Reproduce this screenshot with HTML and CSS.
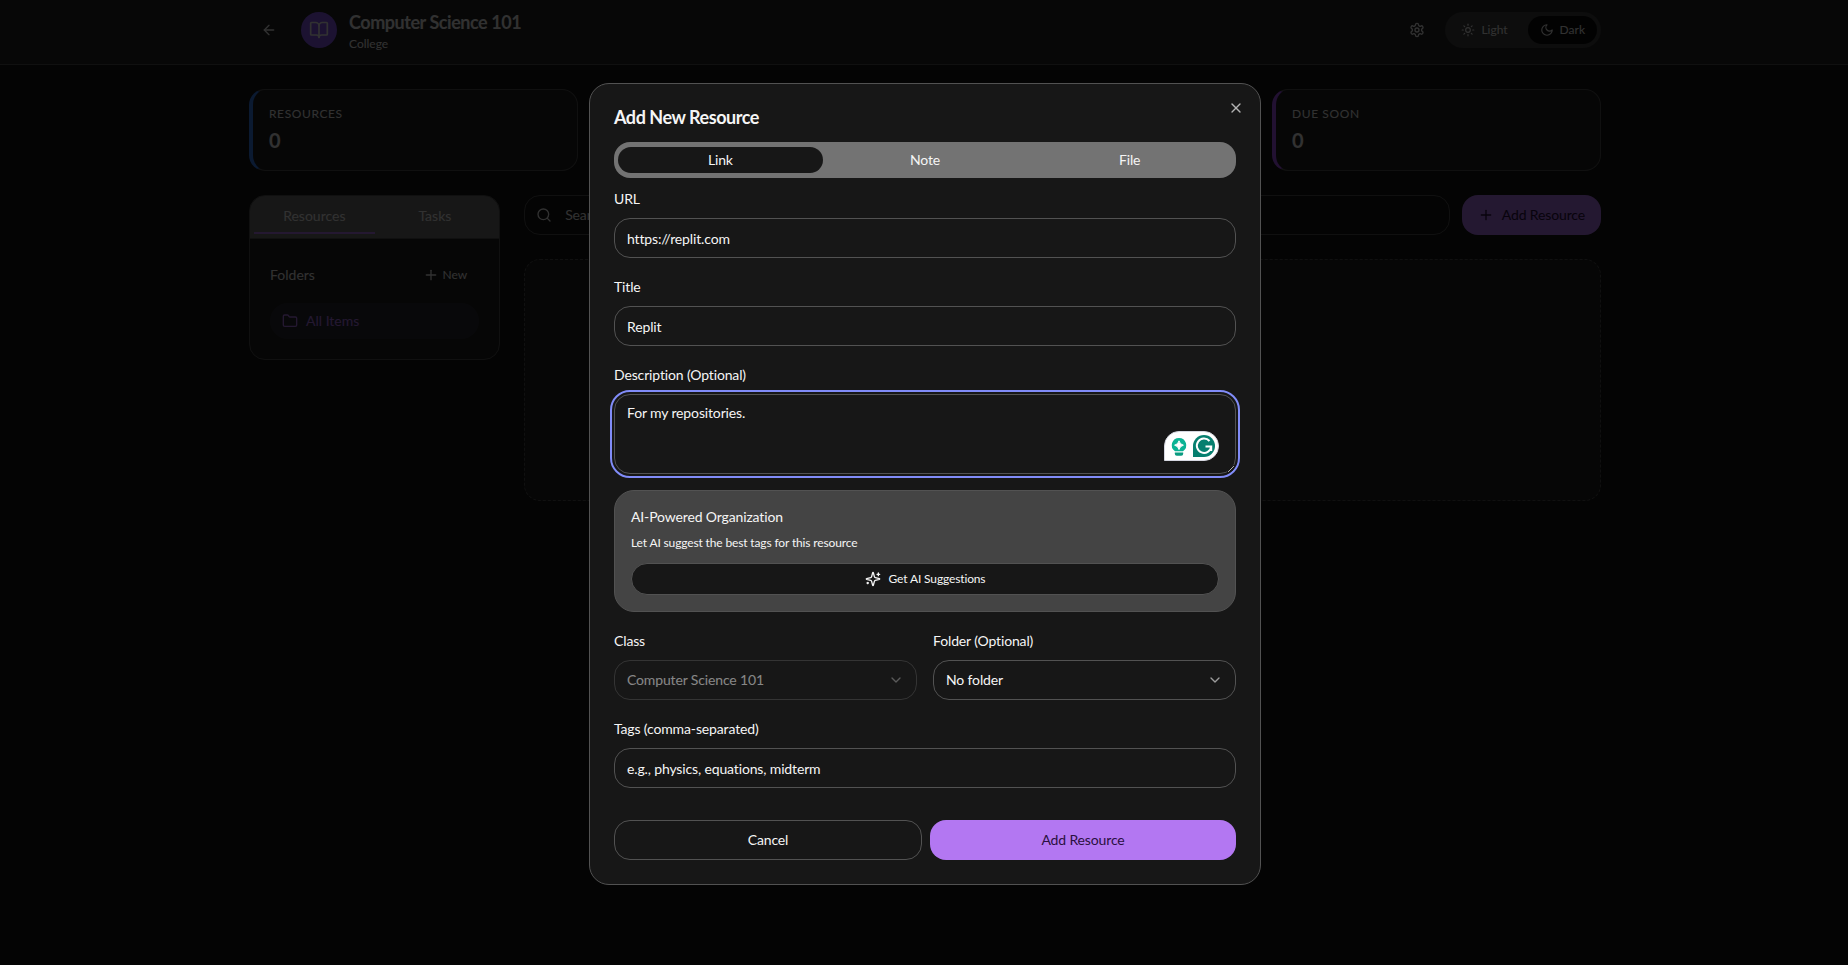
FILE: index.html
```html
<!DOCTYPE html>
<html lang="en">
<head>
<meta charset="utf-8">
<title>Computer Science 101</title>
<link rel="stylesheet" href="styles.css">
</head>
<body>
<div class="app">
  <header class="topbar">
    <div class="container topbar-row">
      <button class="icon-btn" type="button" aria-label="Back">
        <svg class="icon" viewBox="0 0 24 24"><path d="m12 19-7-7 7-7"/><path d="M19 12H5"/></svg>
      </button>
      <span class="course-badge">
        <svg class="icon icon-lg" viewBox="0 0 24 24"><path d="M12 7v14"/><path d="M3 18a1 1 0 0 1-1-1V4a1 1 0 0 1 1-1h5a4 4 0 0 1 4 4 4 4 0 0 1 4-4h5a1 1 0 0 1 1 1v13a1 1 0 0 1-1 1h-6a3 3 0 0 0-3 3 3 3 0 0 0-3-3z"/></svg>
      </span>
      <div class="course">
        <h1 class="course-title">Computer Science 101</h1>
        <p class="course-level">College</p>
      </div>
      <div class="topbar-actions">
        <button class="icon-btn" type="button" aria-label="Settings">
          <svg class="icon" viewBox="0 0 24 24"><path d="M12.22 2h-.44a2 2 0 0 0-2 2v.18a2 2 0 0 1-1 1.73l-.43.25a2 2 0 0 1-2 0l-.15-.08a2 2 0 0 0-2.73.73l-.22.38a2 2 0 0 0 .73 2.73l.15.1a2 2 0 0 1 1 1.72v.51a2 2 0 0 1-1 1.74l-.15.09a2 2 0 0 0-.73 2.73l.22.38a2 2 0 0 0 2.73.73l.15-.08a2 2 0 0 1 2 0l.43.25a2 2 0 0 1 1 1.73V20a2 2 0 0 0 2 2h.44a2 2 0 0 0 2-2v-.18a2 2 0 0 1 1-1.73l.43-.25a2 2 0 0 1 2 0l.15.08a2 2 0 0 0 2.73-.73l.22-.39a2 2 0 0 0-.73-2.73l-.15-.08a2 2 0 0 1-1-1.74v-.5a2 2 0 0 1 1-1.74l.15-.09a2 2 0 0 0 .73-2.73l-.22-.38a2 2 0 0 0-2.73-.73l-.15.08a2 2 0 0 1-2 0l-.43-.25a2 2 0 0 1-1-1.73V4a2 2 0 0 0-2-2z"/><circle cx="12" cy="12" r="3"/></svg>
        </button>
        <div class="theme-switch">
          <button class="theme-option" type="button">
            <svg class="icon icon-sm" viewBox="0 0 24 24"><circle cx="12" cy="12" r="4"/><path d="M12 2v2"/><path d="M12 20v2"/><path d="m4.93 4.93 1.41 1.41"/><path d="m17.66 17.66 1.41 1.41"/><path d="M2 12h2"/><path d="M20 12h2"/><path d="m6.34 17.66-1.41 1.41"/><path d="m19.07 4.93-1.41 1.41"/></svg>
            Light
          </button>
          <button class="theme-option theme-option-active" type="button">
            <svg class="icon icon-sm" viewBox="0 0 24 24"><path d="M12 3a6 6 0 0 0 9 9 9 9 0 1 1-9-9Z"/></svg>
            Dark
          </button>
        </div>
      </div>
    </div>
  </header>

  <main class="container page">
    <section class="stats">
      <article class="card stat stat-blue"><h2 class="stat-label">Resources</h2><p class="stat-value">0</p></article>
      <article class="card stat"></article>
      <article class="card stat"></article>
      <article class="card stat stat-purple"><h2 class="stat-label">Due Soon</h2><p class="stat-value">0</p></article>
    </section>

    <div class="columns">
      <aside class="card sidebar">
        <div class="side-tabs">
          <button class="side-tab side-tab-active" type="button">Resources</button>
          <button class="side-tab" type="button">Tasks</button>
        </div>
        <div class="folders">
          <div class="folders-head">
            <h2 class="folders-title">Folders</h2>
            <button class="new-btn" type="button">
              <svg class="icon" viewBox="0 0 24 24"><path d="M5 12h14"/><path d="M12 5v14"/></svg>
              New
            </button>
          </div>
          <button class="folder-item" type="button">
            <svg class="icon" viewBox="0 0 24 24"><path d="M20 20a2 2 0 0 0 2-2V8a2 2 0 0 0-2-2h-7.9a2 2 0 0 1-1.69-.9L9.6 3.9A2 2 0 0 0 7.93 3H4a2 2 0 0 0-2 2v13a2 2 0 0 0 2 2Z"/></svg>
            All Items
          </button>
        </div>
      </aside>
      <section class="content">
        <div class="toolbar">
          <label class="search">
            <svg class="icon" viewBox="0 0 24 24"><circle cx="11" cy="11" r="8"/><path d="m21 21-4.3-4.3"/></svg>
            <input class="search-input" type="search" placeholder="Search resources..." aria-label="Search resources">
          </label>
          <button class="btn btn-primary" type="button">
            <svg class="icon" viewBox="0 0 24 24"><path d="M5 12h14"/><path d="M12 5v14"/></svg>
            Add Resource
          </button>
        </div>
        <div class="empty"></div>
      </section>
    </div>
  </main>
</div>

<div class="overlay">
  <form class="dialog" role="dialog" aria-labelledby="dialog-title">
    <button class="close" type="button" aria-label="Close">
      <svg class="icon" viewBox="0 0 24 24"><path d="M18 6 6 18"/><path d="m6 6 12 12"/></svg>
    </button>
    <h2 class="dialog-title" id="dialog-title">Add New Resource</h2>
    <div class="tabs">
      <button class="tab tab-active" type="button">Link</button>
      <button class="tab" type="button">Note</button>
      <button class="tab" type="button">File</button>
    </div>
    <div class="fields">
      <div class="field">
        <label class="label" for="url">URL</label>
        <input class="control" id="url" type="url" value="https://replit.com">
      </div>
      <div class="field">
        <label class="label" for="title">Title</label>
        <input class="control" id="title" type="text" value="Replit">
      </div>
      <div class="field">
        <label class="label" for="description">Description (Optional)</label>
        <div class="area-wrap">
          <textarea class="control area" id="description">For my repositories.</textarea>
          <span class="assistant">
            <svg class="assistant-art" viewBox="0 0 55 30">
              <path d="M0.500 29.500V15A14.500 14.500 0 0 1 15 0.500H40A14.500 14.500 0 0 1 40 29.500Z" fill="#fff" stroke="#d5d7e0"/>
              <path d="M15 7a7.200 7.200 0 0 0-4 13.200h8A7.200 7.200 0 0 0 15 7Z" fill="#0ab394"/>
              <path d="M15 9.800Q15.800 13.400 19.400 14.200Q15.800 15 15 18.600Q14.200 15 10.600 14.200Q14.200 13.400 15 9.800Z" fill="#fff" stroke="#fff" stroke-linejoin="round"/>
              <path d="M10.800 21.600h8.400v1.200a2 2 0 0 1-2 2h-4.400a2 2 0 0 1-2-2Z" fill="#0a9a80"/>
              <path d="M29 26V15A11 11 0 1 1 40 26Z" fill="#067f6f"/>
              <path d="M45.500 10A7.200 7.200 0 1 0 47.200 15.500H41.500M47.200 15.500V20" fill="none" stroke="#fff" stroke-width="2"/>
            </svg>
          </span>
        </div>
      </div>
      <section class="ai">
        <h3 class="ai-title">AI-Powered Organization</h3>
        <p class="ai-text">Let AI suggest the best tags for this resource</p>
        <button class="ai-btn" type="button">
          <svg class="icon" viewBox="0 0 24 24"><path d="M9.937 15.500A2 2 0 0 0 8.500 14.063l-6.135-1.582a.5.5 0 0 1 0-.962L8.500 9.936A2 2 0 0 0 9.937 8.500l1.582-6.135a.5.5 0 0 1 .963 0L14.063 8.500A2 2 0 0 0 15.500 9.937l6.135 1.581a.5.5 0 0 1 0 .964L15.500 14.063a2 2 0 0 0-1.437 1.437l-1.582 6.135a.5.5 0 0 1-.963 0z"/><path d="M20 3v4"/><path d="M22 5h-4"/><path d="M4 17v2"/><path d="M5 18H3"/></svg>
          Get AI Suggestions
        </button>
      </section>
      <div class="pair">
        <div class="field">
          <label class="label" for="class">Class</label>
          <div class="select-wrap select-disabled">
            <select class="control" id="class" disabled><option>Computer Science 101</option></select>
            <svg class="icon chevron" viewBox="0 0 24 24"><path d="m6 9 6 6 6-6"/></svg>
          </div>
        </div>
        <div class="field">
          <label class="label" for="folder">Folder (Optional)</label>
          <div class="select-wrap">
            <select class="control" id="folder"><option>No folder</option></select>
            <svg class="icon chevron" viewBox="0 0 24 24"><path d="m6 9 6 6 6-6"/></svg>
          </div>
        </div>
      </div>
      <div class="field">
        <label class="label" for="tags">Tags (comma-separated)</label>
        <input class="control" id="tags" type="text" placeholder="e.g., physics, equations, midterm">
      </div>
    </div>
    <div class="actions">
      <button class="btn btn-outline" type="button">Cancel</button>
      <button class="btn btn-primary" type="submit">Add Resource</button>
    </div>
  </form>
</div>
</body>
</html>
```

FILE: styles.css
```css
:root {
  --bg: #141414;
  --card: #202020;
  --surface: #171717;
  --line: #525252;
  --faint: #404040;
  --muted: #737373;
  --text: #f5f5f5;
  --primary: #b377f2;
}

* {
  box-sizing: border-box;
  margin: 0;
}

body {
  min-height: 100vh;
  background: var(--bg);
  color: var(--text);
  font: 14px/20px Lato, sans-serif;
  letter-spacing: -0.01em;
  overflow: hidden;
}

button,
input,
select,
textarea {
  font: inherit;
  color: inherit;
  letter-spacing: inherit;
}

button {
  border: 0;
  background: none;
  padding: 0;
}

.icon {
  width: 16px;
  height: 16px;
  flex: none;
  fill: none;
  stroke: currentColor;
  stroke-width: 2;
  stroke-linecap: round;
  stroke-linejoin: round;
}

.icon-sm {
  width: 14px;
  height: 14px;
}

.icon-lg {
  width: 20px;
  height: 20px;
}

.app {
  padding-left: 2px;
}

.container {
  max-width: 1400px;
  margin: 0 auto;
  padding: 0 24px;
}

.topbar {
  margin-left: -2px;
  padding: 8px 0 12px 2px;
  border-bottom: 1px solid var(--line);
  background: #242424;
}

.topbar-row {
  display: flex;
  align-items: center;
}

.icon-btn {
  display: grid;
  place-items: center;
  width: 40px;
  height: 36px;
}

.course-badge {
  display: grid;
  place-items: center;
  width: 36px;
  height: 36px;
  margin: 0 12px;
  border-radius: 50%;
  background: #8b5cf6;
}

.course-title {
  font-size: 18px;
  line-height: 28px;
  letter-spacing: -0.025em;
}

.course-level {
  font-size: 12px;
  line-height: 16px;
  letter-spacing: 0;
}

.topbar-actions {
  display: flex;
  gap: 8px;
  margin-left: auto;
}

.theme-switch {
  display: flex;
  gap: 8px;
  padding: 4px;
  border-radius: 18px;
  background: #404040;
}

.theme-option {
  display: flex;
  align-items: center;
  gap: 6px;
  height: 28px;
  padding: 0 12px;
  border-radius: 14px;
  font-size: 12px;
  letter-spacing: 0;
}

.theme-option-active {
  background: #0c0c0c;
}

.page {
  display: grid;
  gap: 24px;
  padding-top: 24px;
}

.card {
  border: 1px solid var(--line);
  border-radius: 16px;
  background: var(--card);
}

.stats {
  display: grid;
  grid-template-columns: repeat(4, 1fr);
  gap: 12px;
}

.stat {
  padding: 16px;
  border-left-width: 4px;
}

.stat-blue {
  border-left-color: #3b82f6;
}

.stat-purple {
  border-left-color: #a855f7;
}

.stat-label {
  margin-bottom: 4px;
  font-size: 12px;
  font-weight: 400;
  line-height: 16px;
  letter-spacing: 0.05em;
  text-transform: uppercase;
}

.stat-value {
  font-size: 20px;
  font-weight: 700;
  line-height: 28px;
}

.columns {
  display: grid;
  grid-template-columns: repeat(5, 1fr);
  gap: 24px;
  align-items: start;
}

.content {
  grid-column: span 4;
}

.sidebar {
  overflow: hidden;
}

.side-tabs {
  display: flex;
  padding: 4px;
  border-bottom: 1px solid var(--line);
  background: var(--muted);
  letter-spacing: 0;
}

.side-tab {
  flex: 1;
  height: 34px;
  border-bottom: 2px solid transparent;
}

.side-tab-active {
  border-color: var(--primary);
}

.folders {
  display: grid;
  gap: 12px;
  padding: 20px;
  letter-spacing: 0;
}

.folders-head {
  display: flex;
  align-items: center;
  justify-content: space-between;
}

.folders-title {
  font-size: 14px;
  font-weight: 400;
}

.new-btn {
  display: flex;
  align-items: center;
  gap: 4px;
  height: 32px;
  padding: 0 12px;
  font-size: 12px;
}

.folder-item {
  display: flex;
  align-items: center;
  gap: 8px;
  height: 36px;
  padding: 0 12px;
  border-radius: 18px;
  background: #2c2c36;
  color: var(--primary);
}

.toolbar {
  display: flex;
  gap: 12px;
  margin-bottom: 24px;
}

.search {
  display: flex;
  flex: 1;
  align-items: center;
  gap: 12px;
  height: 40px;
  padding: 0 11px;
  border: 1px solid var(--line);
  border-radius: 16px;
}

.search-input {
  flex: 1;
  padding: 0 1px;
  border: 0;
  outline: 0;
  background: none;
}

.search-input::placeholder,
.control::placeholder {
  color: inherit;
  opacity: 1;
}

.btn {
  display: flex;
  align-items: center;
  justify-content: center;
  gap: 8px;
  height: 40px;
  padding: 0 16px;
  border-radius: 16px;
}

.btn-primary {
  background: var(--primary);
  color: #2a1040;
}

.btn-outline {
  border: 1px solid var(--line);
}

.empty {
  height: 242px;
  border: 1px dashed var(--line);
  border-radius: 16px;
  background: var(--card);
}

.overlay {
  position: fixed;
  inset: 0;
  display: flex;
  align-items: center;
  justify-content: center;
  padding: 3px 0 0 2px;
  background: rgba(0, 0, 0, 0.8);
}

.dialog {
  position: relative;
  width: 672px;
  max-width: 100%;
  padding: 24px;
  border: 1px solid var(--line);
  border-radius: 20px;
  background: var(--surface);
}

.dialog-title {
  margin-bottom: 16px;
  font-size: 18px;
  line-height: 18px;
  letter-spacing: -0.025em;
}

.close {
  position: absolute;
  top: 16px;
  right: 16px;
  display: flex;
  opacity: 0.7;
}

.tabs {
  display: flex;
  align-items: center;
  height: 36px;
  margin-bottom: 8px;
  padding: 0 4px;
  border-radius: 16px;
  background: var(--muted);
}

.tab {
  flex: 1;
  height: 26px;
  border-radius: 13px;
}

.tab-active {
  background: var(--surface);
}

.fields {
  display: grid;
  gap: 16px;
}

.field {
  display: grid;
  gap: 8px;
}

.label {
  padding-top: 2px;
  line-height: 22px;
}

.control {
  display: block;
  width: 100%;
  height: 40px;
  padding: 0 12px;
  border: 1px solid var(--line);
  border-radius: 16px;
  outline: 0;
  background: var(--surface);
  appearance: none;
}

.area-wrap {
  position: relative;
}

.area {
  height: 80px;
  padding-top: 8px;
  outline: 2px solid #818cf8;
  outline-offset: 2px;
}

.assistant {
  position: absolute;
  right: 17px;
  bottom: 13px;
  display: flex;
}

.assistant-art {
  width: 55px;
  height: 30px;
}

.ai {
  padding: 16px;
  border: 1px solid var(--line);
  border-radius: 20px;
  background: #444;
}

.ai-title {
  margin-bottom: 8px;
  font-size: 14px;
  font-weight: 400;
}

.ai-text {
  margin-bottom: 12px;
  font-size: 12px;
  line-height: 16px;
}

.ai-btn {
  display: flex;
  align-items: center;
  justify-content: center;
  gap: 8px;
  width: 100%;
  height: 32px;
  border: 1px solid var(--line);
  border-radius: 16px;
  background: var(--surface);
  font-size: 12px;
}

.pair {
  display: grid;
  grid-template-columns: 1fr 1fr;
  gap: 16px;
}

.select-wrap {
  position: relative;
}

.select-wrap .control {
  opacity: 1;
}

.select-disabled {
  opacity: 0.5;
}

.chevron {
  position: absolute;
  top: 12px;
  right: 13px;
  opacity: 0.6;
  pointer-events: none;
}

.actions {
  display: flex;
  gap: 8px;
  margin-top: 32px;
}

.actions .btn {
  flex: 1;
}
```
